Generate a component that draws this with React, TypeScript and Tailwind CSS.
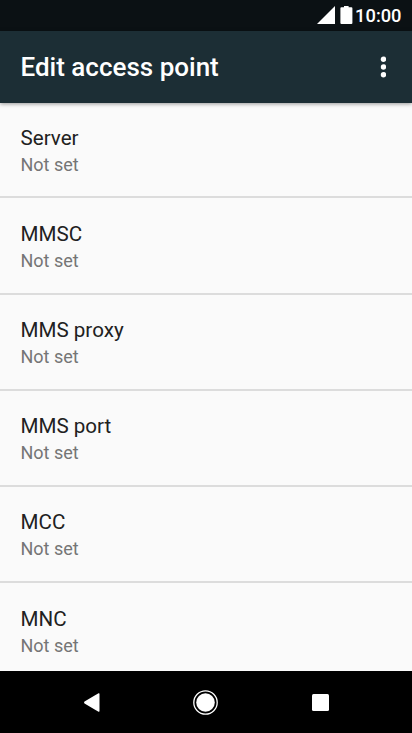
const items = ["Server", "MMSC", "MMS proxy", "MMS port", "MCC", "MNC"];

export default function App() {
  return (
    <div className="flex h-[733px] w-[412px] flex-col overflow-hidden bg-[#fafafa] font-['Roboto',sans-serif]">
      <div className="flex h-[31px] shrink-0 items-center justify-end bg-[#0b1114] pr-[10.5px] text-white">
        <svg width="18" height="19" viewBox="0 0 18 19" className="mr-[5px]"><path d="M0 18L18 0V18Z" fill="white" /></svg>
        <svg width="13" height="19" viewBox="0 0 13 19" className="mr-[2px]"><path d="M4 0h4.6v1.2H11.4q1 0 1 1V17q0 1-1 1H1.4q-1 0-1-1V2.2q0-1 1-1H4Z" fill="white" /></svg>
        <span className="text-[18.3px] leading-[31px] font-medium">10:00</span>
      </div>
      <header className="relative z-10 flex h-[72px] shrink-0 items-center justify-between bg-[#1c2e35] pr-[26px] pl-[20.5px] shadow-[0_1px_4px_rgba(0,0,0,0.4)]">
        <h1 className="text-[26px] font-medium text-white">Edit access point</h1>
        <svg width="6" height="22" viewBox="0 0 6 22" fill="white"><circle cx="3.5" cy="3.3" r="2.7" /><circle cx="3.5" cy="11" r="2.7" /><circle cx="3.5" cy="18.7" r="2.7" /></svg>
      </header>
      <main className="min-h-0 flex-1 overflow-hidden">
        {items.map((item, index) => (
          <div key={item} className={`border-[#dcdcdc] pl-[20.5px] ${index === 0 ? "h-[93.4px] pt-[22px]" : "h-[96.15px] border-t-2 pt-[22.6px]"}`}>
            <div className="text-[20.6px] leading-[27px] text-[#212121]">{item}</div>
            <div className="text-[18px] leading-[25px] text-[#757575]">Not set</div>
          </div>
        ))}
      </main>
      <nav className="h-[62px] shrink-0 bg-black">
        <svg width="412" height="62" viewBox="0 0 412 62" fill="white">
          <path d="M84.5 30.5L98.5 22.3Q99.5 22 99.5 23V40Q99.5 41 98.5 40.7L84.5 32.5Q83.5 31.5 84.5 30.5Z" />
          <circle cx="205.5" cy="31.5" r="11.7" fill="none" stroke="white" strokeWidth="1.3" />
          <circle cx="205.5" cy="31.5" r="9.3" />
          <rect x="312" y="23" width="17" height="17" rx="1.5" />
        </svg>
      </nav>
    </div>
  );
}
